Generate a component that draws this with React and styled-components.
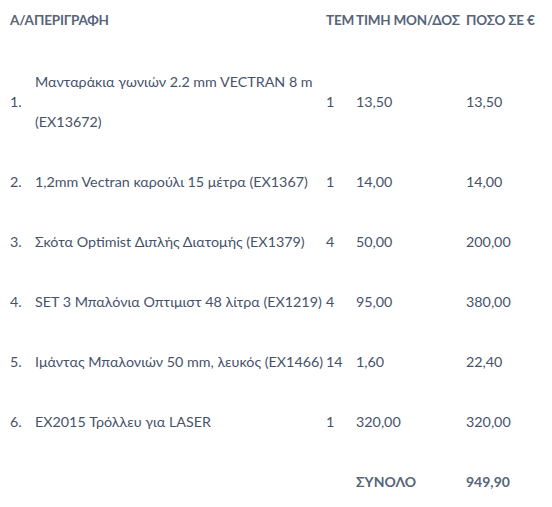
import styled, { createGlobalStyle } from "styled-components";

const GlobalStyle = createGlobalStyle`
    body {
        margin: 8px;
        background: #ffffff;
        font-family: Lato, "Noto Sans", sans-serif;
    }
`;

const items = [
    { no: "1.", lines: ["Μανταράκια γωνιών 2.2 mm VECTRAN 8 m", "(EX13672)"], qty: "1", price: "13,50", total: "13,50" },
    { no: "2.", lines: ["1,2mm Vectran καρούλι 15 μέτρα (EX1367)"], qty: "1", price: "14,00", total: "14,00" },
    { no: "3.", lines: ["Σκότα Optimist Διπλής Διατομής (EX1379)"], qty: "4", price: "50,00", total: "200,00" },
    { no: "4.", lines: ["SET 3 Μπαλόνια Οπτιμιστ 48 λίτρα (EX1219)"], qty: "4", price: "95,00", total: "380,00" },
    { no: "5.", lines: ["Ιμάντας Μπαλονιών 50 mm, λευκός (EX1466)"], qty: "14", price: "1,60", total: "22,40" },
    { no: "6.", lines: ["EX2015 Τρόλλευ για LASER"], qty: "1", price: "320,00", total: "320,00" },
];

const App = () => {
    return (
        <>
            <GlobalStyle />
            <Table>
                <colgroup>
                    <col style={{ width: 22 }} />
                    <col style={{ width: 290 }} />
                    <col style={{ width: 28 }} />
                    <col style={{ width: 108 }} />
                    <col />
                </colgroup>
                <thead>
                    <tr>
                        <Head>Α/Α</Head>
                        <Head>ΠΕΡΙΓΡΑΦΗ</Head>
                        <Head>ΤΕΜ</Head>
                        <Head>ΤΙΜΗ ΜΟΝ/ΔΟΣ</Head>
                        <Head>ΠΟΣΟ ΣΕ €</Head>
                    </tr>
                </thead>
                <tbody>
                    {items.map((item) => (
                        <tr key={item.no}>
                            <Cell>{item.no}</Cell>
                            <Cell $desc>
                                {item.lines.map((line, i) => (
                                    <Line key={i}>{line}</Line>
                                ))}
                            </Cell>
                            <Cell>{item.qty}</Cell>
                            <Cell>{item.price}</Cell>
                            <Cell>{item.total}</Cell>
                        </tr>
                    ))}
                    <tr>
                        <Cell />
                        <Cell />
                        <Cell />
                        <Cell $bold>ΣΥΝΟΛΟ</Cell>
                        <Cell $bold>949,90</Cell>
                    </tr>
                </tbody>
            </Table>
        </>
    );
}

export default App;

const Table = styled.table`
    table-layout: fixed;
    border-collapse: separate;
    border-spacing: 2px;
    width: 100%;
`;

const Head = styled.th`
    padding: 0 0 21px 0;
    text-align: left;
    vertical-align: top;
    white-space: nowrap;
    font-size: 13.5px;
    font-weight: 700;
    letter-spacing: -0.2px;
    line-height: 20px;
    color: #576479;
`;

const Cell = styled.td`
    padding: 9px 0 9px ${props => props.$desc ? "1px" : "0"};
    text-align: left;
    vertical-align: middle;
    white-space: nowrap;
    font-size: ${props => props.$bold ? "14px" : "14.3px"};
    font-weight: ${props => props.$bold ? 700 : 400};
    line-height: 40px;
    color: ${props => props.$bold ? "#576479" : "#46526a"};
`;

const Line = styled.div`
    white-space: nowrap;
`;
